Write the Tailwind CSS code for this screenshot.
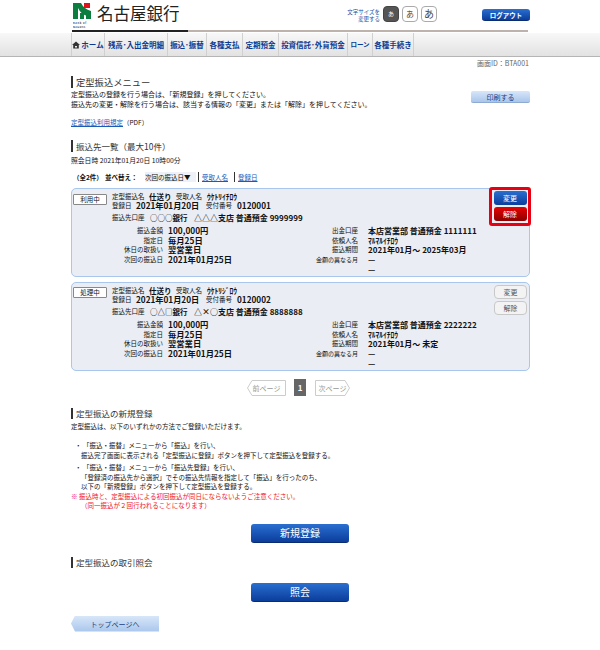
<!DOCTYPE html>
<html lang="ja">
<head>
<meta charset="utf-8">
<script src="https://cdn.jsdelivr.net/npm/@tailwindcss/browser@4"></script>
</head>
<body class="bg-white font-['Noto_Sans_CJK_JP','Noto_Sans',sans-serif] text-[7px] leading-[10px] text-[#111] w-[600px] h-[650px] overflow-hidden">
<header class="relative h-[33px] w-[600px]">
  <div class="absolute left-[73px] top-[3px] w-[18px] h-[25px]">
    <svg width="18" height="25" viewBox="0 0 18 25">
      <path d="M0 0 H8 Q11 6 18 8 V16 H13 V12.5 Q8 11 5 5 V16 H0Z" fill="#0b7d3e"/>
      <rect x="7" y="10" width="4" height="6" fill="#0b7d3e"/>
      <rect x="11" y="0" width="6" height="5" fill="#e2121c"/>
      <text x="0" y="20.5" font-size="2.6" letter-spacing=".6" font-weight="700" fill="#444">Bank of</text>
      <text x="0" y="24.5" font-size="2.6" letter-spacing=".35" font-weight="700" fill="#444">NAGOYA</text>
    </svg>
  </div>
  <div class="absolute left-[97px] top-[2px] text-[16.5px] leading-[22px] font-normal text-[#222]">名古屋銀行</div>
  <div class="absolute left-[72px] top-[30px] w-[456px] h-[2px] bg-[#bdb3ac]"><div class="w-[116px] h-[2px] bg-[#222]"></div></div>
  <div class="absolute left-[344px] top-[9px] w-[36px] text-right text-[5.5px] leading-[7px] text-[#1a4fa8]">文字サイズを<br>変更する</div>
  <div class="absolute left-[383px] top-[6px] flex gap-[3px]">
    <div class="w-[16px] h-[16px] rounded-[4px] bg-[#555] border border-[#444] flex items-center justify-center text-[6px] text-white">あ</div>
    <div class="w-[16px] h-[16px] rounded-[4px] bg-white border border-[#aaa] flex items-center justify-center text-[8px] text-[#444]">あ</div>
    <div class="w-[16px] h-[16px] rounded-[4px] bg-white border border-[#aaa] flex items-center justify-center text-[10px] text-[#444]">あ</div>
  </div>
  <div class="absolute left-[482px] top-[9px] w-[48px] h-[12px] rounded-[3px] bg-gradient-to-b from-[#2a6fd0] to-[#0c3d9c] border-b border-[#0a2c70] flex items-center justify-center text-[6.5px] font-bold text-white">ログアウト</div>
</header>
<nav class="h-[24px] bg-gradient-to-b from-[#f8f8f8] to-[#e2e2e2] border-b border-[#b5b5b5] pl-[71px] flex text-[7.5px] leading-[23px] font-bold text-[#0b3a94]">
  <div class="w-[34px] border-l border-r border-[#d0d0d0] flex items-center justify-center gap-[1px]"><svg width="8" height="8" viewBox="0 0 8 8"><path d="M4 .5 L8 4 H6.8 V7.5 H1.2 V4 H0Z M3 5 V6.5 H5 V5Z" fill="#333" fill-rule="evenodd"/></svg><span>ホーム</span></div>
  <div class="w-[63px] border-r border-[#d0d0d0] text-center whitespace-nowrap">残高･入出金明細</div>
  <div class="w-[39px] border-r border-[#d0d0d0] text-center whitespace-nowrap">振込･振替</div>
  <div class="w-[36px] border-r border-[#d0d0d0] text-center whitespace-nowrap">各種支払</div>
  <div class="w-[36px] border-r border-[#d0d0d0] text-center whitespace-nowrap">定期預金</div>
  <div class="w-[69px] border-r border-[#d0d0d0] text-center whitespace-nowrap">投資信託･外貨預金</div>
  <div class="w-[25px] border-r border-[#d0d0d0] text-center whitespace-nowrap text-[6.5px]">ローン</div>
  <div class="w-[41px] border-r border-[#d0d0d0] text-center whitespace-nowrap">各種手続き</div>
</nav>
<main class="w-[459px] ml-[71px]">
  <div class="h-[10px] mt-[1px] text-right pr-[1px] text-[#666]">画面ID：BTA001</div>
  <div class="relative mt-[8px]">
    <h1 class="border-l-2 border-[#333] pl-[3px] h-[12px] text-[9.3px] leading-[12px] font-normal text-[#333]">定型振込メニュー</h1>
    <div class="absolute right-0 top-[15px] w-[59px] h-[12px] rounded-[2px] bg-gradient-to-b from-[#d8e6f8] to-[#a9c6ec] border-b border-[#8eaad0] text-center text-[#1b3f86] leading-[12px]">印刷する</div>
    <p class="mt-[1px] leading-[10px]">定型振込の登録を行う場合は、「新規登録」を押してください。<br>振込先の変更・解除を行う場合は、該当する情報の「変更」または「解除」を押してください。</p>
    <p class="mt-[8px] text-[6.5px]"><span class="text-[#1a5ab8] underline">定型振込利用規定</span>（PDF）</p>
  </div>
  <h2 class="mt-[13px] border-l-2 border-[#333] pl-[3px] h-[12px] text-[8.5px] leading-[12px] font-normal text-[#333]">振込先一覧（最大10件）</h2>
  <p class="mt-[3px] text-[6.8px]">照会日時 2021年01月20日 10時00分</p>
  <div class="mt-[7px] h-[10px] flex items-center pl-[2px] text-[6.5px] whitespace-nowrap">
    <b class="w-[32px]">（全2件）</b><b class="w-[40px]">並べ替え：</b>
    <span class="bg-[#eef2f8] w-[51px]">次回の振込日▼</span>
    <span class="border-l border-[#333] ml-[2px] pl-[3px] w-[36px] h-[10px] text-[#1a5ab8] underline">受取人名</span>
    <span class="border-l border-[#333] pl-[3px] h-[10px] text-[#1a5ab8] underline">登録日</span>
  </div>

  <section class="relative mt-[6px] h-[89px] rounded-[5px] border border-[#a9c6ec] bg-[#eaedf3] text-[6.5px]">
    <div class="absolute left-[1px] top-[5px] w-[34px] h-[11px] bg-white border border-[#888] rounded-[1px] text-center leading-[9px]">利用中</div>
    <div class="pl-[40px] pt-[3px] whitespace-nowrap">
      <div class="h-[9px] leading-[9px] flex"><span class="w-[37px]">定型振込名</span><b class="w-[27px] text-[7.5px]">仕送り</b><span class="w-[31px]">受取人名</span><b class="text-[7.5px]">ｳｹﾄﾘｲﾁﾛｳ</b></div>
      <div class="h-[9px] leading-[9px] flex items-center"><span class="w-[24px]">登録日</span><b class="w-[70px] text-[8.2px]">2021年01月20日</b><span class="w-[31px]">受付番号</span><b class="text-[8.2px]">0120001</b></div>
      <div class="mt-[2px] h-[11px] leading-[11px] flex items-center"><span class="w-[38px]">振込先口座</span><b class="w-[44px] text-[7.5px]">○○○銀行</b><b class="text-[8px]">△△△支店 普通預金 9999999</b></div>
    </div>
    <div class="flex mt-[3px] whitespace-nowrap">
      <div class="w-[224px] grid grid-cols-[91px_1fr] gap-x-[5px] auto-rows-[9.7px] leading-[9.7px]">
        <span class="text-right">振込金額</span><b class="text-[8.3px]">100,000円</b>
        <span class="text-right">指定日</span><b class="text-[8.3px]">毎月25日</b>
        <span class="text-right">休日の取扱い</span><b class="text-[8.3px]">翌営業日</b>
        <span class="text-right">次回の振込日</span><b class="text-[8.3px]">2021年01月25日</b>
      </div>
      <div class="grid grid-cols-[62px_1fr] gap-x-[10px] auto-rows-[9.7px] leading-[9.7px]">
        <span class="text-right">出金口座</span><b class="text-[8px]">本店営業部 普通預金 1111111</b>
        <span class="text-right">依頼人名</span><b class="text-[7.5px]">ﾏﾙﾏﾙｲﾁﾛｳ</b>
        <span class="text-right">振込期間</span><b class="text-[8px]">2021年01月～ 2025年03月</b>
        <span class="text-right text-[6px]">金額の異なる月</span><b class="text-[8px]">—</b>
        <span></span><b class="text-[8px]">—</b>
      </div>
    </div>
    <div class="absolute left-[417px] top-[-2px] w-[42px] h-[39px] border-[3px] border-[#e60012] rounded-[3px] flex flex-col items-center gap-[2px] pt-[1px] bg-[#eaedf3] text-[7px]">
      <div class="w-[33px] h-[14px] rounded-[3px] bg-gradient-to-b from-[#2a6fd0] to-[#0c3d9c] text-center text-white leading-[14px]">変更</div>
      <div class="w-[33px] h-[14px] rounded-[3px] bg-gradient-to-b from-[#e80000] to-[#8c0000] text-center text-white leading-[14px]">解除</div>
    </div>
  </section>

  <section class="relative mt-[5px] h-[89px] rounded-[5px] border border-[#a9c6ec] bg-[#eaedf3] text-[6.5px]">
    <div class="absolute left-[1px] top-[4px] w-[34px] h-[11px] bg-white border border-[#888] rounded-[1px] text-center leading-[9px]">処理中</div>
    <div class="pl-[40px] pt-[3px] whitespace-nowrap">
      <div class="h-[9px] leading-[9px] flex"><span class="w-[37px]">定型振込名</span><b class="w-[27px] text-[7.5px]">仕送り</b><span class="w-[31px]">受取人名</span><b class="text-[7.5px]">ｳｹﾄﾘｼﾞﾛｳ</b></div>
      <div class="h-[9px] leading-[9px] flex items-center"><span class="w-[24px]">登録日</span><b class="w-[70px] text-[8.2px]">2021年01月20日</b><span class="w-[31px]">受付番号</span><b class="text-[8.2px]">0120002</b></div>
      <div class="mt-[2px] h-[11px] leading-[11px] flex items-center"><span class="w-[38px]">振込先口座</span><b class="w-[44px] text-[7.5px]">○△□銀行</b><b class="text-[8px]">△×○支店 普通預金 8888888</b></div>
    </div>
    <div class="flex mt-[3px] whitespace-nowrap">
      <div class="w-[224px] grid grid-cols-[91px_1fr] gap-x-[5px] auto-rows-[9.7px] leading-[9.7px]">
        <span class="text-right">振込金額</span><b class="text-[8.3px]">100,000円</b>
        <span class="text-right">指定日</span><b class="text-[8.3px]">毎月25日</b>
        <span class="text-right">休日の取扱い</span><b class="text-[8.3px]">翌営業日</b>
        <span class="text-right">次回の振込日</span><b class="text-[8.3px]">2021年01月25日</b>
      </div>
      <div class="grid grid-cols-[62px_1fr] gap-x-[10px] auto-rows-[9.7px] leading-[9.7px]">
        <span class="text-right">出金口座</span><b class="text-[8px]">本店営業部 普通預金 2222222</b>
        <span class="text-right">依頼人名</span><b class="text-[7.5px]">ﾏﾙﾏﾙｲﾁﾛｳ</b>
        <span class="text-right">振込期間</span><b class="text-[8px]">2021年01月～ 未定</b>
        <span class="text-right text-[6px]">金額の異なる月</span><b class="text-[8px]">—</b>
        <span></span><b class="text-[8px]">—</b>
      </div>
    </div>
    <div class="absolute left-[422px] top-[2px] flex flex-col gap-[2px] text-[7px]">
      <div class="w-[33px] h-[14px] rounded-[4px] bg-[#f3f3f3] border border-[#c8c8c8] text-center text-[#555] leading-[12px]">変更</div>
      <div class="w-[33px] h-[14px] rounded-[4px] bg-[#f3f3f3] border border-[#c8c8c8] text-center text-[#555] leading-[12px]">解除</div>
    </div>
  </section>

  <div class="mt-[8px] h-[17px] flex items-center pl-[176px] text-[#999]">
    <div class="relative w-[39px] h-[16px] text-center leading-[16px]"><svg class="absolute inset-0" width="39" height="16"><path d="M.5 8 L5 .5 H38.5 V15.5 H5Z" fill="#fff" stroke="#ccc"/></svg><span class="relative">前ページ</span></div>
    <div class="w-[12px] h-[17px] ml-[8px] mr-[9px] bg-[#666] text-white text-center font-bold text-[8px] leading-[17px]">1</div>
    <div class="relative w-[35px] h-[16px] text-center leading-[16px]"><svg class="absolute inset-0" width="35" height="16"><path d="M.5 .5 H30 L34.5 8 L30 15.5 H.5Z" fill="#fff" stroke="#ccc"/></svg><span class="relative">次ページ</span></div>
  </div>

  <h2 class="mt-[12px] border-l-2 border-[#333] pl-[3px] h-[11px] text-[8.5px] leading-[11px] font-normal text-[#333]">定型振込の新規登録</h2>
  <p class="mt-[2px] text-[6.5px]">定型振込は、以下のいずれかの方法でご登録いただけます。</p>
  <ul class="mt-[10px] pl-[10px] leading-[9.5px] text-[6.5px]">
    <li class="relative"><span class="absolute left-[-6px]">・</span><span class="ml-[2px]">「振込・振替」メニューから「振込」を行い、</span><br>振込完了画面に表示される「定型振込に登録」ボタンを押下して定型振込を登録する。</li>
    <li class="relative mt-[3px]"><span class="absolute left-[-6px]">・</span><span class="ml-[2px]">「振込・振替」メニューから「振込先登録」を行い、</span><br>「登録済の振込先から選択」でその振込先情報を指定して「振込」を行ったのち、<br>以下の「新規登録」ボタンを押下して定型振込を登録する。</li>
  </ul>
  <p class="mt-[0px] text-[#f0141e] leading-[9.5px] text-[6.5px]">※ 振込時と、定型振込による初回振込が同日にならないようご注意ください。<br><span class="pl-[10px]">（同一振込が２回行われることになります）</span></p>

  <div class="mt-[13px] flex justify-center pr-[1px]"><div class="w-[98px] h-[19px] rounded-[3px] bg-gradient-to-b from-[#2a6fd0] to-[#0c3d9c] border-b border-[#0a2c70] text-center text-white text-[10px] leading-[18px]">新規登録</div></div>
  <h2 class="mt-[14px] border-l-2 border-[#333] pl-[3px] h-[11px] text-[8.5px] leading-[11px] font-normal text-[#333]">定型振込の取引照会</h2>
  <div class="mt-[15px] flex justify-center pr-[1px]"><div class="w-[98px] h-[19px] rounded-[3px] bg-gradient-to-b from-[#2a6fd0] to-[#0c3d9c] border-b border-[#0a2c70] text-center text-white text-[10px] leading-[18px]">照会</div></div>
  <div class="mt-[14px] w-[88px] h-[16px] bg-gradient-to-b from-[#d8e6f8] to-[#a9c6ec] [clip-path:polygon(0_50%,4px_0,100%_0,100%_100%,4px_100%)] text-center text-[#1b3f86] leading-[16px]">トップページへ</div>
</main>
</body>
</html>
